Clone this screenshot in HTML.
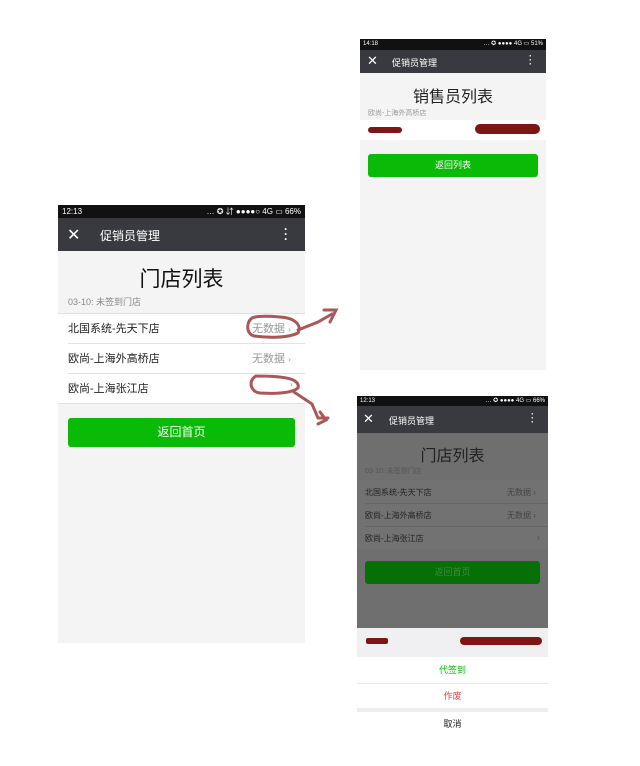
<!DOCTYPE html>
<html><head><meta charset="utf-8"><style>
*{margin:0;padding:0;box-sizing:border-box}
body{width:640px;height:766px;background:#fff;position:relative;overflow:hidden;font-family:"Liberation Sans","Noto Sans CJK SC",sans-serif}
.a{position:absolute}
.sb{background:#111;color:#fff;font-size:7px;line-height:1}
.nav{background:#393a3f;color:#fff}
.c{text-align:center}
</style></head><body>

<!-- Left phone -->
<div class="a" style="left:58px;top:205px;width:247px;height:438px;background:#f4f4f4"></div>
<div class="a sb" style="left:58px;top:205px;width:247px;height:13px;padding:3px 4px;font-size:8px"><span>12:13</span><span style="float:right">… ✪ ⇵ ●●●●○ 4G ▭ 66%</span></div>
<div class="a nav" style="left:58px;top:218px;width:247px;height:33px"></div>
<div class="a" style="left:67px;top:225px;color:#fff;font-size:16px">✕</div>
<div class="a" style="left:100px;top:227px;color:#fff;font-size:12px">促销员管理</div>
<div class="a" style="left:284px;top:227px;color:#fff;font-size:12px;font-weight:bold;line-height:5px">·<br>·<br>·</div>
<div class="a c" style="left:58px;top:263px;width:247px;font-size:21px;color:#111">门店列表</div>
<div class="a" style="left:68px;top:295px;font-size:9px;color:#888">03-10: 未签到门店</div>
<div class="a" style="left:58px;top:313px;width:247px;height:90px;background:#fff"></div>
<div class="a" style="left:68px;top:343px;width:237px;height:1px;background:#e2e2e2"></div>
<div class="a" style="left:68px;top:373px;width:237px;height:1px;background:#e2e2e2"></div>
<div class="a" style="left:58px;top:313px;width:247px;height:1px;background:#e2e2e2"></div>
<div class="a" style="left:58px;top:403px;width:247px;height:1px;background:#e2e2e2"></div>
<div class="a" style="left:68px;top:320px;font-size:11px;color:#222">北国系统-先天下店</div>
<div class="a" style="left:68px;top:350px;font-size:11px;color:#222">欧尚-上海外高桥店</div>
<div class="a" style="left:68px;top:380px;font-size:11px;color:#222">欧尚-上海张江店</div>
<div class="a" style="left:252px;top:320px;font-size:11px;color:#999">无数据 <span style="font-size:8px">›</span></div>
<div class="a" style="left:252px;top:350px;font-size:11px;color:#999">无数据 <span style="font-size:8px">›</span></div>
<div class="a" style="left:290px;top:380px;font-size:8px;color:#999">›</div>
<div class="a c" style="left:68px;top:418px;width:227px;height:29px;background:#09bb07;border-radius:3px;color:#fff;font-size:12px;line-height:29px">返回首页</div>

<svg class="a" style="left:0;top:0" width="640" height="766">
<g fill="none" stroke="#9b3a3a" stroke-width="3" stroke-linecap="round" opacity="0.85">
<path d="M252 318 C246 322 246 334 254 336 C268 338 288 338 298 333 C302 326 296 318 280 317 C268 316 256 316 252 318"/>
<path d="M298 330 L318 322 L332 314 M324 310 L336 310 L330 322"/>
<path d="M256 376 C248 380 250 392 260 393 C276 394 292 393 298 388 C300 380 290 376 256 376"/>
<path d="M294 392 L312 404 L318 418 L328 418 M320 412 L326 420 L318 424"/>
</g>
</svg>

<!-- Top right phone -->
<div class="a" style="left:360px;top:39px;width:186px;height:331px;background:#f4f4f4"></div>
<div class="a sb" style="left:360px;top:39px;width:186px;height:11px;padding:2px 3px;font-size:6px"><span>14:18</span><span style="float:right">… ✪ ●●●● 4G ▭ 51%</span></div>
<div class="a nav" style="left:360px;top:50px;width:186px;height:23px"></div>
<div class="a" style="left:367px;top:53px;color:#fff;font-size:13px">✕</div>
<div class="a" style="left:392px;top:56px;color:#fff;font-size:9px">促销员管理</div>
<div class="a" style="left:529px;top:54px;color:#fff;font-size:9px;font-weight:bold;line-height:4px">·<br>·<br>·</div>
<div class="a c" style="left:360px;top:83px;width:186px;font-size:16px;color:#222">销售员列表</div>
<div class="a" style="left:368px;top:108px;font-size:7px;color:#999">欧尚-上海外高桥店</div>
<div class="a" style="left:360px;top:120px;width:186px;height:20px;background:#fff"></div>
<div class="a" style="left:368px;top:127px;width:34px;height:6px;background:#7e1616;border-radius:3px"></div>
<div class="a" style="left:475px;top:124px;width:65px;height:10px;background:#7e1616;border-radius:5px"></div>
<div class="a c" style="left:368px;top:154px;width:170px;height:23px;background:#09bb07;border-radius:3px;color:#fff;font-size:9px;line-height:23px">返回列表</div>

<!-- Bottom right phone -->
<div class="a" style="left:357px;top:396px;width:191px;height:340px;background:#f4f4f4"></div>
<div class="a sb" style="left:357px;top:396px;width:191px;height:10px;padding:2px 3px;font-size:6px"><span>12:13</span><span style="float:right">… ✪ ●●●● 4G ▭ 66%</span></div>
<div class="a nav" style="left:357px;top:406px;width:191px;height:27px"></div>
<div class="a" style="left:363px;top:411px;color:#fff;font-size:13px">✕</div>
<div class="a" style="left:389px;top:414px;color:#fff;font-size:9px">促销员管理</div>
<div class="a" style="left:531px;top:412px;color:#fff;font-size:9px;font-weight:bold;line-height:4px">·<br>·<br>·</div>
<div class="a" style="left:357px;top:433px;width:191px;height:195px;background:#6f6f6f"></div>
<div class="a c" style="left:357px;top:442px;width:191px;font-size:16px;color:#222">门店列表</div>
<div class="a" style="left:365px;top:466px;font-size:7px;color:#555">03-10: 未签到门店</div>
<div class="a" style="left:357px;top:480px;width:191px;height:70px;background:#727272"></div>
<div class="a" style="left:365px;top:503px;width:183px;height:1px;background:#666"></div>
<div class="a" style="left:365px;top:526px;width:183px;height:1px;background:#666"></div>
<div class="a" style="left:365px;top:487px;font-size:8px;color:#222">北国系统-先天下店</div>
<div class="a" style="left:365px;top:510px;font-size:8px;color:#222">欧尚-上海外高桥店</div>
<div class="a" style="left:365px;top:533px;font-size:8px;color:#222">欧尚-上海张江店</div>
<div class="a" style="left:507px;top:510px;font-size:8px;color:#444">无数据 ›</div>
<div class="a" style="left:507px;top:487px;font-size:8px;color:#444">无数据 ›</div>
<div class="a" style="left:537px;top:533px;font-size:8px;color:#444">›</div>
<div class="a c" style="left:365px;top:561px;width:175px;height:23px;background:#066f05;border-radius:3px;color:#3d8a3c;font-size:9px;line-height:23px">返回首页</div>
<div class="a" style="left:357px;top:628px;width:191px;height:29px;background:#f0f0f2"></div>
<div class="a" style="left:366px;top:638px;width:22px;height:6px;background:#7e1616;border-radius:2px"></div>
<div class="a" style="left:460px;top:637px;width:82px;height:8px;background:#7e1616;border-radius:4px"></div>
<div class="a" style="left:357px;top:657px;width:191px;height:79px;background:#fff"></div>
<div class="a c" style="left:357px;top:663px;width:191px;font-size:9px;color:#09bb07">代签到</div>
<div class="a" style="left:357px;top:683px;width:191px;height:1px;background:#e8e8e8"></div>
<div class="a c" style="left:357px;top:689px;width:191px;font-size:9px;color:#e64340">作废</div>
<div class="a" style="left:357px;top:708px;width:191px;height:4px;background:#eeeef0"></div>
<div class="a c" style="left:357px;top:717px;width:191px;font-size:9px;color:#222">取消</div>
</body></html>
